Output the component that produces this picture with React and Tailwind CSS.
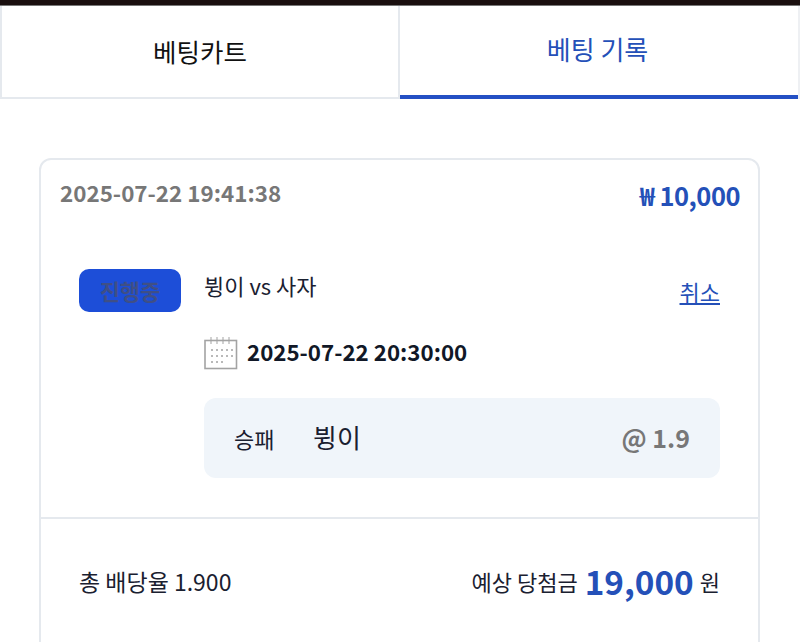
export default function App() {
  return (
    <div className="h-[642px] w-[800px] overflow-hidden bg-white font-['Noto_Sans_CJK_KR','Noto_Sans',sans-serif]">
      <div className="h-[6px] border-b border-[#777] bg-[#1a0f0f]" />
      <div className="grid h-[93px] grid-cols-2">
        <div className="flex items-center justify-center border-x-2 border-b-2 border-[#e5e9ee] text-[25.5px] text-[#111]">베팅카트</div>
        <div className="border-r-2 border-[#eef0f3]">
          <div className="flex h-full items-center justify-center border-b-4 border-[#2450c4] pr-[3px] pb-1 text-[26px] text-[#2450b8]">베팅 기록</div>
        </div>
      </div>
      <div className="mt-[59px] mr-[40px] ml-[39px] h-[600px] rounded-xl border-2 border-[#e5e9ee]">
        <div className="flex items-start justify-between pr-[18px] pl-[19px] pt-[15px]">
          <span className="text-[22.4px] leading-[34px] font-bold text-[#777]">2025-07-22 19:41:38</span>
          <span className="mt-[2px] text-[25.5px] leading-[36px] font-bold tracking-[-0.5px] text-[#2450b8]">₩ 10,000</span>
        </div>
        <div className="flex pr-[38px] pl-[38px] pt-[56px]">
          <div className="flex h-[43px] w-[102px] shrink-0 items-center justify-center rounded-[10px] bg-[#1d4ed8] text-[22px] font-bold text-[#3f4f86]">진행중</div>
          <div className="ml-[23px] flex-1">
            <div className="flex items-start justify-between">
              <span className="text-[22px] leading-[32px] text-[#1a2030]">뷩이 vs 사자</span>
              <span className="mt-[4px] text-[22px] leading-[36px] text-[#2450b8] underline underline-offset-2">취소</span>
            </div>
            <div className="mt-[25px] flex items-center gap-[9px]">
              <svg className="translate-y-[2px]" width="34" height="34" viewBox="0 0 34 34" fill="none" stroke="#a3a3a3">
                <rect x="1" y="4.5" width="31.5" height="28" strokeWidth="1.6" />
                <path d="M7 1v7M13 1v7M19 1v7M25 1v7" strokeWidth="1" />
                <path d="M7 14h2M12 14h2M17 14h2M22 14h2M27 14h2M7 20h2M12 20h2M17 20h2M22 20h2M27 20h2M7 26h2M12 26h2M17 26h2" strokeWidth="1.6" />
              </svg>
              <span className="text-[22.3px] leading-[34px] font-bold text-[#111827]">2025-07-22 20:30:00</span>
            </div>
            <div className="mt-[30px] flex h-[80px] items-center rounded-xl bg-[#f0f5fa] pr-[30px] pl-[30px]">
              <span className="mt-[1px] w-[79px] text-[22px] text-[#1a2030]">승패</span>
              <span className="mb-[4px] text-[26px] text-[#1a2030]">뷩이</span>
              <span className="ml-auto text-[25px] font-bold text-[#777]">@ 1.9</span>
            </div>
          </div>
        </div>
        <div className="mt-[39px] flex items-center justify-between border-t-2 border-[#e5e9ee] pr-[38px] pl-[38px] pt-[40px]">
          <span className="text-[23px] text-[#1a2030]">총 배당율 1.900</span>
          <span className="flex items-center text-[22px] text-[#1a2030]">
            예상 당첨금
            <span className="mr-[6px] ml-[7px] text-[33.3px] leading-[44px] font-bold text-[#2450b8]">19,000</span>
            원
          </span>
        </div>
      </div>
    </div>
  );
}
